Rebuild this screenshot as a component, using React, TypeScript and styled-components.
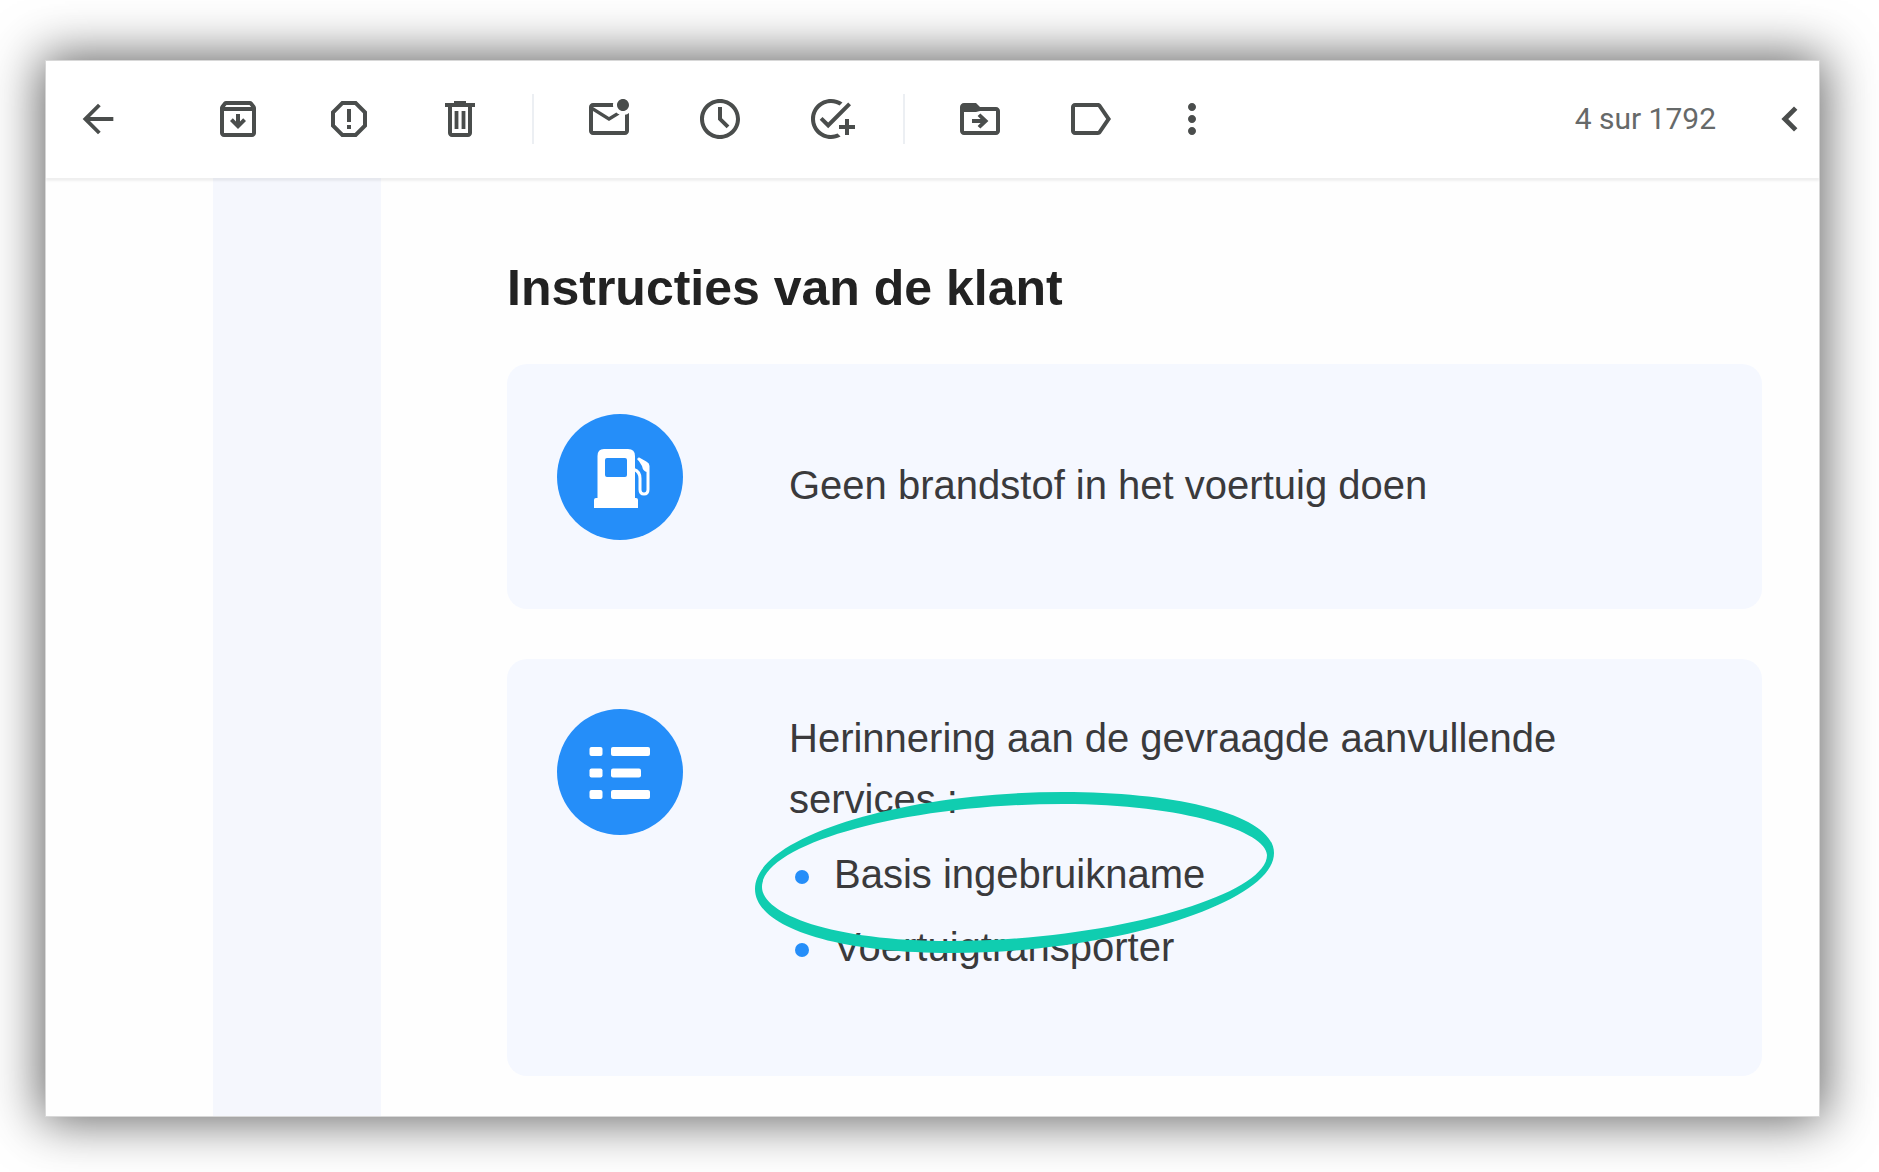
import React from "react";
import styled, { createGlobalStyle } from "styled-components";

const GlobalStyle = createGlobalStyle`
  *, *::before, *::after { box-sizing: border-box; }
  body {
    margin: 0;
    background: #ffffff;
    font-family: "Liberation Sans", Arial, sans-serif;
  }
`;

const Page = styled.div`
  display: flex;
  min-height: 100vh;
  padding: 60px 59px 55px 45px;
`;

const Window = styled.main`
  display: flex;
  flex: 1;
  flex-direction: column;
  min-width: 0;
  border: 1px solid #d8d8d8;
  background: #fefefe;
  box-shadow: 0 0 48px 4px rgba(0, 0, 0, 0.62);
`;

const Toolbar = styled.header`
  position: relative;
  display: flex;
  align-items: center;
  height: 117px;
  padding: 0 5px 2px 28px;
  background: #ffffff;
  box-shadow: 0 3px 2px rgba(0, 0, 0, 0.06);
`;

const ToolGroup = styled.div<{ $indent?: number }>`
  display: flex;
  align-items: center;
  gap: 63px;
  margin-left: ${(p) => p.$indent ?? 0}px;
`;

const ToolButton = styled.button<{ $narrow?: boolean }>`
  display: flex;
  align-items: center;
  justify-content: center;
  width: ${(p) => (p.$narrow ? 28 : 48)}px;
  height: 48px;
  padding: 0;
  border: 0;
  background: none;
  color: #4a4d4c;
  cursor: pointer;

  svg {
    flex: none;
    fill: currentColor;
  }
`;

const Separator = styled.span`
  width: 2px;
  height: 50px;
  margin: 0 51px 0 48px;
  background: #eceff3;
`;

const Pager = styled.div`
  display: flex;
  align-items: center;
  gap: 50px;
  margin-left: auto;
  color: #666969;
  font-family: Roboto, sans-serif;
  font-size: 30px;
  line-height: 36px;
  white-space: nowrap;
`;

const Message = styled.div`
  display: flex;
  flex: 1;
  padding-left: 167px;
`;

const Margin = styled.div`
  flex: none;
  width: 168px;
  background: #f5f7fd;
`;

const Instructions = styled.section`
  display: flex;
  flex: 1;
  flex-direction: column;
  gap: 50px;
  min-width: 0;
  padding: 80px 57px 40px 126px;
`;

const Title = styled.h1`
  margin: 0 0 -4px;
  color: #222222;
  font-size: 50px;
  font-weight: 700;
  line-height: 60px;
`;

const Card = styled.article`
  display: flex;
  align-items: flex-start;
  gap: 106px;
  padding: 49px 100px 52px 50px;
  border-radius: 20px;
  background: #f5f8ff;
`;

const Badge = styled.svg`
  flex: none;
  width: 126px;
  height: 126px;
  margin: 1px 0;
`;

const CardBody = styled.div`
  display: flex;
  flex: 1;
  flex-direction: column;
  justify-content: center;
  gap: 14px;
  min-height: 144px;
  color: #3a3a3c;
  font-size: 40px;
  line-height: 61px;
`;

const Text = styled.p`
  margin: 0;
`;

const Services = styled.ul`
  display: flex;
  flex-direction: column;
  gap: 12px;
  margin: 0 0 46px;
  padding: 0 0 0 6px;
  list-style: none;
`;

const Service = styled.li`
  position: relative;
  display: flex;
  align-items: flex-start;
  gap: 25px;

  &::before {
    flex: none;
    width: 14px;
    height: 14px;
    margin-top: 26px;
    border-radius: 50%;
    background: #258ef9;
    content: "";
  }
`;

const Circled = styled.svg`
  position: absolute;
  z-index: 1;
  top: -52px;
  left: -40px;
  width: 519px;
  height: 161px;
  pointer-events: none;
`;

const icons = {
  back: "M20 11H7.83l5.59-5.59L12 4l-8 8 8 8 1.41-1.41L7.83 13H20v-2z",
  archive:
    "M20.54 5.23l-1.39-1.68C18.88 3.21 18.47 3 18 3H6c-.47 0-.88.21-1.16.55L3.46 5.23C3.17 5.57 3 6.02 3 6.5V19c0 1.1.9 2 2 2h14c1.1 0 2-.9 2-2V6.5c0-.48-.17-.93-.46-1.27zM6.24 5h11.52l.83 1H5.42l.82-1zM5 19V8h14v11H5zM12 17l4-4-1.4-1.4-1.6 1.6V9.5h-2v3.7l-1.6-1.6L8 13z",
  report:
    "M15.73 3H8.27L3 8.27v7.46L8.27 21h7.46L21 15.73V8.27L15.73 3zM19 14.9L14.9 19H9.1L5 14.9V9.1L9.1 5h5.8L19 9.1v5.8zM11 7h2v6.5h-2zM11 15h2v2h-2z",
  trash:
    "M15 4V3H9v1H4.5v2H6v13c0 1.1.9 2 2 2h8c1.1 0 2-.9 2-2V6h1.5V4H15zm1 15H8V6h8v13zM9.3 8h1.9v9H9.3zM12.8 8h1.9v9h-1.9z",
  unread:
    "M22 8.98V18c0 1.1-.9 2-2 2H4c-1.1 0-2-.9-2-2V6c0-1.1.9-2 2-2h10.1c-.06.32-.1.66-.1 1s.04.68.1 1H4l8 5 3.67-2.29c.47.43 1.02.76 1.63.98L12 13 4 8v10h16V9.9c.74-.15 1.42-.48 2-.92zM16 5c0 1.66 1.34 3 3 3s3-1.34 3-3-1.34-3-3-3-3 1.34-3 3z",
  snooze:
    "M11.99 2C6.47 2 2 6.48 2 12s4.47 10 9.99 10C17.52 22 22 17.52 22 12S17.52 2 11.99 2zM12 20c-4.42 0-8-3.58-8-8s3.58-8 8-8 8 3.58 8 8-3.58 8-8 8zM13 6h-2v6.4l4.3 4.2 1.4-1.4L13 11.6z",
  task:
    "M22 5.18L10.59 16.6l-4.24-4.24 1.41-1.41 2.83 2.83 10-10L22 5.18zM12 20c-4.41 0-8-3.59-8-8s3.59-8 8-8c1.57 0 3.04.46 4.28 1.25l1.45-1.45C16.1 2.67 14.13 2 12 2 6.48 2 2 6.48 2 12s4.48 10 10 10c1.73 0 3.36-.44 4.78-1.22l-1.5-1.5c-1 .46-2.11.72-3.28.72zm7-5h-3v2h3v3h2v-3h3v-2h-3v-3h-2v3z",
  move:
    "M20 6h-8l-2-2H4c-1.1 0-2 .9-2 2v12c0 1.1.9 2 2 2h16c1.1 0 2-.9 2-2V8c0-1.1-.9-2-2-2zM20 18H4V8.5h6L12 8h8v10zM12.2 9.2l4 3.8-4 3.8-1.4-1.3 1.5-1.5H8v-2h4.3l-1.5-1.5z",
  label:
    "M17.1 4.84C16.74 4.33 16.17 4 15.5 4H4c-1.1 0-2 .9-2 2v12c0 1.1.9 2 2 2h11.5c.67 0 1.24-.33 1.6-.84L22 12l-4.9-7.16zM15.5 18H4V6h11.5l4.1 6-4.1 6z",
  more:
    "M12 8c1.1 0 2-.9 2-2s-.9-2-2-2-2 .9-2 2 .9 2 2 2zm0 2c-1.1 0-2 .9-2 2s.9 2 2 2 2-.9 2-2-.9-2-2-2zm0 6c-1.1 0-2 .9-2 2s.9 2 2 2 2-.9 2-2-.9-2-2-2z",
  previous: "M15.7 7.41L14 5.7l-6.3 6.3 6.3 6.3 1.7-1.71L11.12 12z",
};

type ToolProps = {
  icon: keyof typeof icons;
  label: string;
  size?: number;
  narrow?: boolean;
};

function Tool({ icon, label, size = 48, narrow }: ToolProps) {
  return (
    <ToolButton type="button" aria-label={label} $narrow={narrow}>
      <svg width={size} height={size} viewBox="0 0 24 24" aria-hidden="true">
        <path fillRule="evenodd" d={icons[icon]} />
      </svg>
    </ToolButton>
  );
}

function FuelBadge() {
  return (
    <Badge viewBox="0 0 126 126" aria-hidden="true">
      <circle cx="63" cy="63" r="63" fill="#258ef9" />
      <path
        fill="#fff"
        fillRule="evenodd"
        d="M47 35h24q7 0 7 7v42h1q2 0 2 2v8H37v-8q0-2 2-2h1.5V42q0-7 6.5-7zM50 44q-2 0-2 2v15q0 2 2 2h18q2 0 2-2V46q0-2-2-2z"
      />
      <path
        fill="none"
        stroke="#fff"
        strokeWidth="3"
        d="M77 55.5q6 2 6 9v11q0 4.5 4 4.5t4-4.5V52q0-2-2-3l-8-4.5"
      />
      <path fill="#fff" d="M80 44l11 6v8q-5 0-6-6z" />
    </Badge>
  );
}

function ListBadge() {
  return (
    <Badge viewBox="0 0 126 126" aria-hidden="true">
      <circle cx="63" cy="63" r="63" fill="#258ef9" />
      <g fill="#fff">
        <rect x="32.5" y="38" width="13" height="9" rx="2" />
        <rect x="54" y="38" width="39" height="9" rx="2" />
        <rect x="32.5" y="59.5" width="13" height="9" rx="2" />
        <rect x="54" y="59.5" width="30" height="9" rx="2" />
        <rect x="32.5" y="81" width="13" height="9" rx="2" />
        <rect x="54" y="81" width="39" height="9" rx="2" />
      </g>
    </Badge>
  );
}

export default function App() {
  return (
    <Page>
      <GlobalStyle />
      <Window>
        <Toolbar>
          <Tool icon="back" label="Retour" size={46} />
          <ToolGroup $indent={92}>
            <Tool icon="archive" label="Archiver" />
            <Tool icon="report" label="Signaler comme spam" />
            <Tool icon="trash" label="Supprimer" />
          </ToolGroup>
          <Separator />
          <ToolGroup>
            <Tool icon="unread" label="Marquer comme non lu" />
            <Tool icon="snooze" label="Mettre en attente" />
            <Tool icon="task" label="Ajouter à Tasks" />
          </ToolGroup>
          <Separator />
          <ToolGroup>
            <Tool icon="move" label="Déplacer vers" />
            <Tool icon="label" label="Libellés" />
            <Tool icon="more" label="Plus" narrow />
          </ToolGroup>
          <Pager>
            <span>4 sur 1792</span>
            <Tool icon="previous" label="Plus récent" />
          </Pager>
        </Toolbar>
        <Message>
          <Margin />
          <Instructions>
            <Title>Instructies van de klant</Title>
            <Card>
              <FuelBadge />
              <CardBody>
                <Text>Geen brandstof in het voertuig doen</Text>
              </CardBody>
            </Card>
            <Card>
              <ListBadge />
              <CardBody>
                <Text>{"Herinnering aan de gevraagde aanvullende services\u00a0:"}</Text>
                <Services>
                  <Service>
                    Basis ingebruikname
                    <Circled viewBox="755 792 519 161" aria-hidden="true">
                      <path
                        fill="#10cdb0"
                        fillRule="evenodd"
                        d="M1274 853C1274 816 1182 792 1063 792C901 792 755 837 755 889C755 926 832 953 951 953C1113 953 1274 903 1274 853ZM1267 855C1267 832 1185 804 1063 804C905 804 762 844 762 887C762 914 832 941 950 941C1108 941 1267 896 1267 855Z"
                      />
                    </Circled>
                  </Service>
                  <Service>Voertuigtransporter</Service>
                </Services>
              </CardBody>
            </Card>
          </Instructions>
        </Message>
      </Window>
    </Page>
  );
}
